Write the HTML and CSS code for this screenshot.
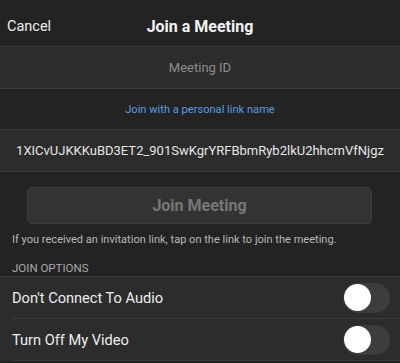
FILE: index.html
```html
<!DOCTYPE html>
<html lang="en">
<head>
  <meta charset="UTF-8" />
  <meta name="viewport" content="width=device-width, initial-scale=1.0"/>
  <title>Join a Meeting</title>
  <link rel="stylesheet" href="styles.css">
</head>
<body>
  <div id="title-bar">
    <span class="cancel">Cancel</span>
    <h2>Join a Meeting</h2>
  </div>

  <div class="field-row">Meeting ID</div>
  <div class="link-row">Join with a personal link name</div>
  <div class="field-row value">1XICvUJKKKuBD3ET2_901SwKgrYRFBbmRyb2lkU2hhcmVfNjgz</div>

  <div class="join-box">
    <button class="join-button" disabled>Join Meeting</button>
    <p class="hint">If you received an invitation link, tap on the link to join the meeting.</p>
  </div>

  <div class="section-label">JOIN OPTIONS</div>
  <div class="options">
    <div class="option-row">
      <span>Don't Connect To Audio</span>
      <span class="toggle"><span class="knob"></span></span>
    </div>
    <div class="option-row">
      <span>Turn Off My Video</span>
      <span class="toggle"><span class="knob"></span></span>
    </div>
  </div>
</body>
</html>
```
FILE: styles.css
```css
body {
  font-family: 'Roboto', sans-serif;
  margin: 0;
  background-color: #232323;
  color: #eee;
}

#title-bar {
  display: flex;
  align-items: center;
  justify-content: center;
  position: relative;
  height: 40px;
  padding-top: 6px;
  border-bottom: 1px solid #3a3a3a;
}

#title-bar h2 {
  margin: 0;
  font-size: 16px;
  font-weight: bold;
  color: #f2f2f2;
}

.cancel {
  position: absolute;
  left: 7px;
  font-size: 14.5px;
  color: #eee;
}

.field-row {
  display: flex;
  align-items: center;
  justify-content: center;
  height: 41px;
  background-color: #2c2c2c;
  border-bottom: 1px solid #3a3a3a;
  font-size: 13px;
  color: #8c8c8c;
}

.field-row.value {
  font-size: 13px;
  color: #e6e6e6;
  white-space: nowrap;
}

.link-row {
  display: flex;
  align-items: center;
  justify-content: center;
  height: 40px;
  border-bottom: 1px solid #3a3a3a;
  font-size: 11.1px;
  color: #5b9be0;
}

.join-box {
  padding: 15px 12px 0;
}

.join-button {
  display: block;
  width: 345px;
  height: 37px;
  margin: 0 0 0 15px;
  background-color: #333;
  border: 1px solid #3c3c3c;
  border-radius: 5px;
  font-family: inherit;
  font-size: 16px;
  font-weight: bold;
  color: #777;
}

.hint {
  margin: 0;
  height: 32px;
  line-height: 32px;
  font-size: 11.05px;
  color: #b8b8b8;
  white-space: nowrap;
}

.section-label {
  padding: 5px 12px 0;
  height: 15px;
  font-size: 11.5px;
  line-height: 14px;
  color: #aaa;
  border-bottom: 1px solid #3a3a3a;
}

.options {
  background-color: #2c2c2c;
}

.option-row {
  display: flex;
  align-items: center;
  justify-content: space-between;
  height: 41px;
  margin-left: 12px;
  padding-right: 10px;
  border-bottom: 1px solid #3a3a3a;
  font-size: 14.6px;
  color: #eee;
}

.toggle {
  display: flex;
  align-items: center;
  width: 47px;
  height: 30px;
  border-radius: 15px;
  background-color: #3d3d3d;
}

.knob {
  width: 27px;
  height: 27px;
  margin-left: 1px;
  border-radius: 50%;
  background-color: #fff;
}
```
